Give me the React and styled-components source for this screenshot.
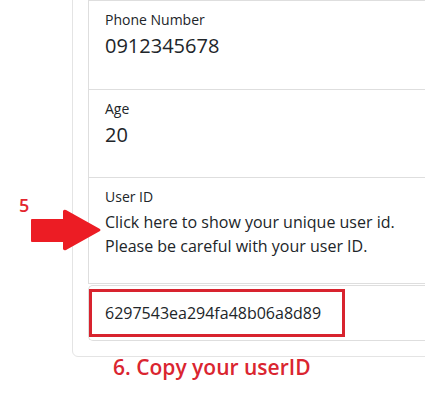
import React from "react";
import styled, { createGlobalStyle } from "styled-components";

const GlobalStyle = createGlobalStyle`
  html, body {
    margin: 0;
    padding: 0;
    background: #fff;
    overflow: hidden;
  }
  * {
    box-sizing: border-box;
  }
`;

const Page = styled.div`
  position: relative;
  width: 425px;
  height: 400px;
  overflow: hidden;
  font-family: "Open Sans", "Noto Sans", sans-serif;
  color: #212529;
`;

const Card = styled.div`
  margin: -17px 0 0 72px;
  width: 420px;
  padding: 16px 0 15px 15px;
  border: 1px solid #e4e4e4;
  border-radius: 6px;
`;

const ListGroup = styled.div`
  display: flex;
  flex-direction: column;
  border: 1px solid #dedede;
  border-right: none;
`;

const Item = styled.div`
  height: ${(p) => p.$height}px;
  padding: 8px 16px 0;
  border-top: ${(p) => (p.$first ? "none" : "1px solid #dedede")};
`;

const Label = styled.div`
  font-size: 14px;
  line-height: 21px;
`;

const Value = styled.div`
  font-size: 20px;
  line-height: 24px;
  margin-top: 4px;
`;

const Hint = styled.p`
  margin: 3px 0 0;
  font-size: 16px;
  line-height: 24px;
`;

const IdRow = styled.div`
  margin-top: 1px;
  height: 56px;
  padding: 3px 0 0 0;
  border: 1px solid #dedede;
  border-right: none;
  border-radius: 5px 0 0 5px;
`;

const IdBox = styled.div`
  width: 256px;
  height: 48px;
  padding: 0 0 0 13px;
  display: flex;
  align-items: center;
  border: 3px solid #d8232e;
  font-size: 16px;
`;

const Step = styled.div`
  margin: -3px 0 0 113px;
  font-size: 21px;
  font-weight: 600;
  line-height: 26px;
  color: #da2530;
`;

const StepNumber = styled.div`
  position: absolute;
  left: 19px;
  top: 193px;
  font-size: 18px;
  font-weight: 600;
  color: #e3262e;
`;

const Arrow = styled.svg`
  position: absolute;
  left: 30px;
  top: 209px;
`;

const App = () => {
  return (
    <>
      <GlobalStyle />
      <Page>
        <Card>
          <ListGroup>
            <Item $first $height={88}>
              <Label>Phone Number</Label>
              <Value>0912345678</Value>
            </Item>
            <Item $height={88}>
              <Label>Age</Label>
              <Value>20</Value>
            </Item>
            <Item $height={106}>
              <Label>User ID</Label>
              <Hint>
                Click here to show your unique user id.
                <br />
                Please be careful with your user ID.
              </Hint>
            </Item>
          </ListGroup>
          <IdRow>
            <IdBox>6297543ea294fa48b06a8d89</IdBox>
          </IdRow>
        </Card>
        <Step>6. Copy your userID</Step>

        <StepNumber>5</StepNumber>
        <Arrow width="72" height="42" viewBox="0 0 72 42">
          <path
            d="M2 10 H33 V2 Q34 0 36 1 L70 20 Q71 21 70 22 L36 41 Q34 42 33 40 V33 H2 Q1 33 1 32 V11 Q1 10 2 10 Z"
            fill="#ec1c24"
          />
        </Arrow>
      </Page>
    </>
  );
};

export default App;
